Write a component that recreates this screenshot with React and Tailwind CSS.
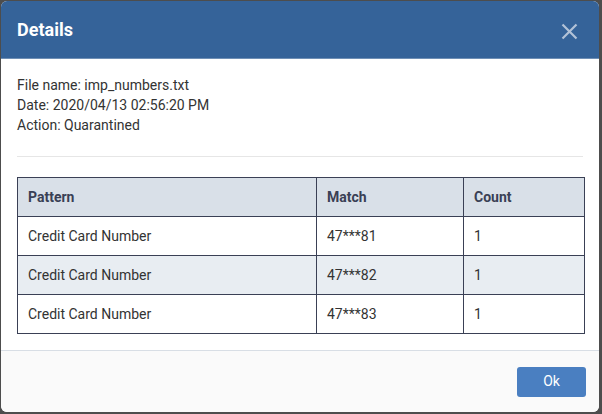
export default function App() {
  const rows = [
    { p: "Credit Card Number", m: "47***81", c: "1", bg: "bg-white" },
    { p: "Credit Card Number", m: "47***82", c: "1", bg: "bg-[#e8edf2]" },
    { p: "Credit Card Number", m: "47***83", c: "1", bg: "bg-white" },
  ];
  return (
    <div
      className="w-[602px] h-[414px] bg-[#4d4d4d] pt-px pl-px overflow-hidden"
      style={{ fontFamily: "Roboto, 'Liberation Sans', sans-serif" }}
    >
      <div className="w-[598px] h-[411px] rounded-[6px] overflow-hidden flex flex-col bg-white">
        <div className="h-[58px] shrink-0 bg-[#356399] flex items-center justify-between pl-4 pr-[21px] border-b border-[#6f8fb5]">
          <div className="text-white font-bold text-[18px] leading-none">Details</div>
          <svg width="17" height="17" viewBox="0 0 17 17" className="mt-[4px]">
            <path d="M1.5 1.5 L15.5 15.5 M15.5 1.5 L1.5 15.5" stroke="#b2c2d7" strokeWidth="2.2" />
          </svg>
        </div>
        <div className="flex-1 px-4 pt-[16px]">
          <div className="text-[14px] leading-[20px] text-[#333]">
            <div>File name: imp_numbers.txt</div>
            <div>Date: 2020/04/13 02:56:20 PM</div>
            <div>Action: Quarantined</div>
          </div>
          <div className="mt-[21px] h-px bg-[#e6e6e6]" />
          <table className="mt-[20px] w-[568px] border-collapse text-[14px] text-[#333]">
            <thead>
              <tr className="bg-[#d9e0e8] h-[39px]">
                <th className="border border-[#3a4055] text-left font-bold text-[#3a4055] pl-[10px] w-[299px]">Pattern</th>
                <th className="border border-[#3a4055] text-left font-bold text-[#3a4055] pl-[10px] w-[147px]">Match</th>
                <th className="border border-[#3a4055] text-left font-bold text-[#3a4055] pl-[10px]">Count</th>
              </tr>
            </thead>
            <tbody>
              {rows.map((r, i) => (
                <tr key={i} className={`${r.bg} h-[39px]`}>
                  <td className="border border-[#3a4055] pl-[10px]">{r.p}</td>
                  <td className="border border-[#3a4055] pl-[10px]">{r.m}</td>
                  <td className="border border-[#3a4055] pl-[10px]">{r.c}</td>
                </tr>
              ))}
            </tbody>
          </table>
        </div>
        <div className="h-[62px] shrink-0 border-t border-[#d8dee5] bg-[#fafafa] flex items-center justify-end pr-[13px]">
          <button className="w-[69px] h-[30px] rounded-[3px] bg-[#4a7fc1] text-white text-[14px]">Ok</button>
        </div>
      </div>
    </div>
  );
}
